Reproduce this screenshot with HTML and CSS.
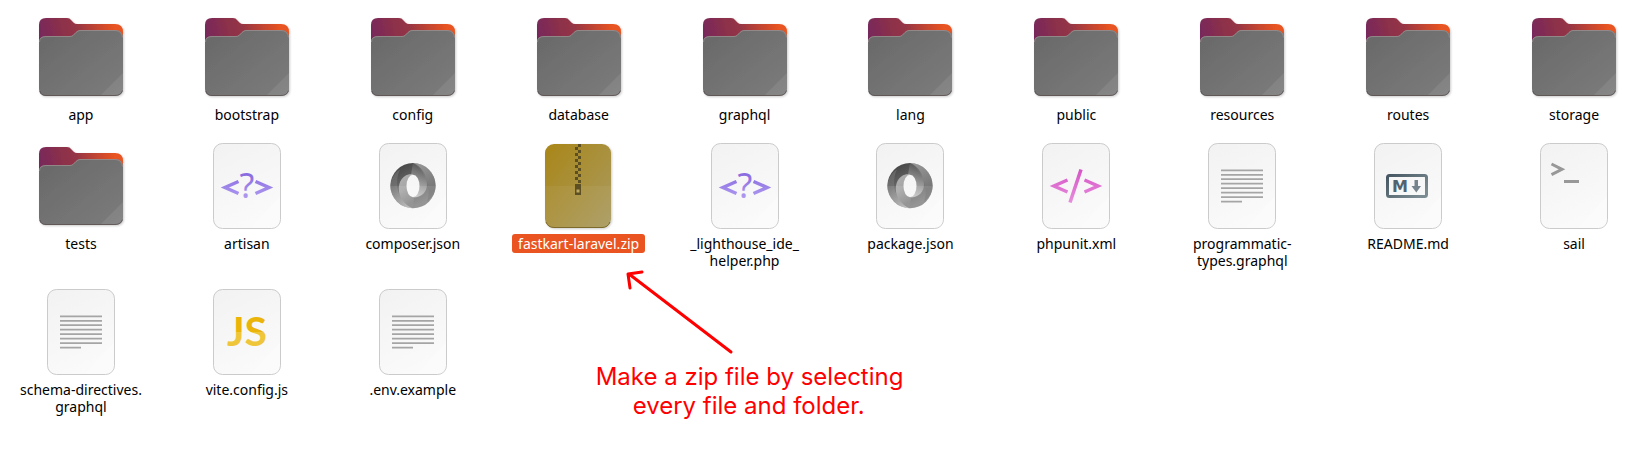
FILE: index.html
```
<!DOCTYPE html>
<html lang="en">
<head>
<meta charset="utf-8">
<meta name="viewport" content="width=device-width, initial-scale=1">
<title>Files</title>
<link rel="stylesheet" href="styles.css">
</head>
<body>
<svg class="sprite" width="0" height="0" aria-hidden="true">
  <defs>
    <linearGradient id="g-back" gradientUnits="userSpaceOnUse" x1="8" y1="34" x2="90" y2="16"><stop offset="0" stop-color="#77285c"/><stop offset=".25" stop-color="#8a2f4c"/><stop offset=".45" stop-color="#953545"/><stop offset=".9" stop-color="#e95420"/></linearGradient>
    <linearGradient id="g-front" x1="0" y1="0" x2="1" y2="1"><stop offset="0" stop-color="#686868"/><stop offset="1" stop-color="#7c7c7c"/></linearGradient>
    <linearGradient id="g-page" x1="0" y1="0" x2=".4" y2="1"><stop offset="0" stop-color="#f2f2f2"/><stop offset="1" stop-color="#fafafa"/></linearGradient>
    <linearGradient id="g-zip" x1="0" y1="0" x2="1" y2="1"><stop offset="0" stop-color="#a98618"/><stop offset="1" stop-color="#a99b62"/></linearGradient>
    <linearGradient id="g-php" gradientUnits="userSpaceOnUse" x1="0" y1="36" x2="0" y2="60"><stop offset="0" stop-color="#8a6be0"/><stop offset="1" stop-color="#ae9af0"/></linearGradient>
    <linearGradient id="g-xml" gradientUnits="userSpaceOnUse" x1="0" y1="32" x2="0" y2="64"><stop offset="0" stop-color="#d655c6"/><stop offset="1" stop-color="#e78ddd"/></linearGradient>
    <linearGradient id="g-js" gradientUnits="userSpaceOnUse" x1="0" y1="33" x2="0" y2="63"><stop offset=".5" stop-color="#ebb40a"/><stop offset=".5" stop-color="#efc53a"/></linearGradient>
    <linearGradient id="g-md" gradientUnits="userSpaceOnUse" x1="26" y1="36" x2="50" y2="66"><stop offset="0" stop-color="#42545f"/><stop offset="1" stop-color="#7c8b92"/></linearGradient>
    <linearGradient id="g-ring" x1="0" y1="0" x2=".5" y2="1"><stop offset="0" stop-color="#3c3c3c"/><stop offset=".5" stop-color="#666"/><stop offset="1" stop-color="#8a8a8a"/></linearGradient>
    <linearGradient id="g-blade-r" x1=".2" y1="0" x2="0" y2="1"><stop offset="0" stop-color="#5c5c5c"/><stop offset=".5" stop-color="#a4a4a4"/><stop offset="1" stop-color="#e4e4e4"/></linearGradient>
    <linearGradient id="g-blade-l" x1="0" y1="0" x2=".3" y2="1"><stop offset="0" stop-color="#c9c9c9"/><stop offset=".5" stop-color="#b4b4b4"/><stop offset="1" stop-color="#8a8a8a"/></linearGradient>
    <linearGradient id="g-rim-r" gradientUnits="userSpaceOnUse" x1="54" y1="26" x2="68" y2="50"><stop offset="0" stop-color="#ccc"/><stop offset="1" stop-color="#707070"/></linearGradient>
    <linearGradient id="g-rim-l" gradientUnits="userSpaceOnUse" x1="42" y1="69" x2="28" y2="48"><stop offset="0" stop-color="#e0e0e0"/><stop offset="1" stop-color="#7c7c7c"/></linearGradient>
    <filter id="shade" x="-10%" y="-10%" width="120%" height="120%"><feDropShadow dx="1" dy="1" stdDeviation="1" flood-opacity=".2"/></filter>

    <symbol id="folder" viewBox="0 0 96 96">
      <g filter="url(#shade)">
        <path d="M6 40V16q0-7 7-7H34q3 0 4 2l3 3q1 1 3 1H82q8 0 8 8V40z" fill="url(#g-back)"/>
        <path d="M6 33q0-6 7-6H37q2 0 3-1l3-3q2-2 4-2H82q8 0 8 8V80q0 7-8 7H13q-7 0-7-7z" fill="url(#g-front)"/>
      </g>
      <path d="M90 64V80q0 7-8 7H67z" fill="#fff" opacity=".08"/>
      <path d="M6.500 33q0-5.500 6.500-5.500H37q2 0 3-1l3-3q2-2 4-2H82q7 0 7.500 7" fill="none" stroke="#9c8f8f" stroke-width=".8"/>
      <path d="M7 82q1 4.500 6 4.500H82q6 0 7.500-5" fill="none" stroke="#5c5050" stroke-width=".8"/>
    </symbol>
    <symbol id="page" viewBox="0 0 96 96">
      <rect x="14.500" y="5.500" width="67" height="85" rx="9" fill="url(#g-page)" stroke="#cbcbcb"/>
      <path d="M81 58V81q0 9-9 9H52z" fill="#fff" opacity=".3"/>
    </symbol>
    <symbol id="php" viewBox="0 0 96 96">
      <use href="#page"/>
      <g fill="none" stroke="url(#g-php)" stroke-width="3.500"><path d="M39.500 43.500L26 49.500l13.500 6"/><path d="M56.500 43.500L70 49.500l-13.500 6"/></g>
      <text class="glyph-question" x="48" y="60" fill="url(#g-php)">?</text>
    </symbol>
    <symbol id="json" viewBox="0 0 96 96">
      <use href="#page"/>
      <circle cx="48" cy="47.700" r="22.600" fill="url(#g-ring)"/>
      <path d="M48 25.100C58 25.100 70.600 33 70.600 48C70.600 56 66 60 62 64C67 50 60 32 48 25.100z" fill="url(#g-rim-r)" opacity=".55"/>
      <path d="M48 70.300C36 70 25.400 60 25.400 48C25.400 42 30 34 35 31.500C28 46 34 64 48 70.300z" fill="url(#g-rim-l)" opacity=".5"/>
      <path d="M48 25.100C56 28 62 37 62 46C62 54 57 59.500 48 59.500L54 48L46 36.500z" fill="url(#g-blade-r)" opacity=".8"/>
      <path d="M48 36C37 36 33.800 44 33.800 51C33.800 59 39 67 48 70.300L49 59.300L42 48z" fill="url(#g-blade-l)" opacity=".8"/>
      <ellipse cx="48" cy="48" rx="6.500" ry="11.300" fill="#f6f6f6"/>
      <path d="M25.500 48h45a22.500 22.500 0 0 1-45 0z" fill="#fff" opacity=".1"/>
    </symbol>
    <symbol id="zip" viewBox="0 0 96 96">
      <g filter="url(#shade)"><rect x="14" y="6" width="66" height="84" rx="9" fill="url(#g-zip)"/></g>
      <path d="M14 48h66V81q0 9-9 9H23q-9 0-9-9z" fill="#fff" opacity=".05"/>
      <path d="M15 84q2 5.500 8 5.500H71q6 0 8-5.500" fill="none" stroke="#7d6b2c"/>
      <path d="M47 6h3v3h-3zm0 6h3v3h-3zm0 6h3v3h-3zm0 6h3v3h-3zm0 6h3v3h-3zm0 6h3v3h-3zm0 6h3v3h-3zM44 9h3v3h-3zm0 6h3v3h-3zm0 6h3v3h-3zm0 6h3v3h-3zm0 6h3v3h-3zm0 6h3v3h-3zM44 46h6v11h-6z" fill="#5c4f24"/>
      <path d="M45.500 51.500h3v3h-3z" fill="#c0a861"/>
    </symbol>
    <symbol id="xml" viewBox="0 0 96 96">
      <use href="#page"/>
      <g fill="none" stroke="url(#g-xml)" stroke-width="3.500"><path d="M39.500 42L26 48l13.500 6"/><path d="M56.500 42L70 48l-13.500 6"/><path d="M53 31.500L42 64.500"/></g>
    </symbol>
    <symbol id="doc" viewBox="0 0 96 96">
      <use href="#page"/>
      <path d="M27 32.300h42M27 36.800h42M27 41.200h42M27 45.700h42M27 50.200h42M27 54.700h42M27 59.200h42M27 63.700h21" stroke="#a5a5a5" stroke-width="1.700"/>
    </symbol>
    <symbol id="md" viewBox="0 0 96 96">
      <use href="#page"/>
      <rect x="27.500" y="37.500" width="39" height="21" rx="2" fill="none" stroke="url(#g-md)" stroke-width="3"/>
      <text class="glyph-md" x="40" y="54" fill="#52636d">M</text>
      <path d="M54.500 42h3.500v6h3L56.300 54.500L51.500 48h3z" fill="#75848c"/>
    </symbol>
    <symbol id="shell" viewBox="0 0 96 96">
      <use href="#page"/>
      <path d="M25.500 26L36 31.300L25.500 36.700M38 43.500h15" fill="none" stroke="#989898" stroke-width="3"/>
    </symbol>
    <symbol id="js" viewBox="0 0 96 96">
      <use href="#page"/>
      <text class="glyph-js" x="48" y="62" fill="url(#g-js)">JS</text>
    </symbol>
  </defs>
</svg>

<main>
  <ul class="files">
    <li><button class="file"><svg class="icon" aria-hidden="true"><use href="#folder"/></svg><span class="name">app</span></button></li>
    <li><button class="file"><svg class="icon" aria-hidden="true"><use href="#folder"/></svg><span class="name">bootstrap</span></button></li>
    <li><button class="file"><svg class="icon" aria-hidden="true"><use href="#folder"/></svg><span class="name">config</span></button></li>
    <li><button class="file"><svg class="icon" aria-hidden="true"><use href="#folder"/></svg><span class="name">database</span></button></li>
    <li><button class="file"><svg class="icon" aria-hidden="true"><use href="#folder"/></svg><span class="name">graphql</span></button></li>
    <li><button class="file"><svg class="icon" aria-hidden="true"><use href="#folder"/></svg><span class="name">lang</span></button></li>
    <li><button class="file"><svg class="icon" aria-hidden="true"><use href="#folder"/></svg><span class="name">public</span></button></li>
    <li><button class="file"><svg class="icon" aria-hidden="true"><use href="#folder"/></svg><span class="name">resources</span></button></li>
    <li><button class="file"><svg class="icon" aria-hidden="true"><use href="#folder"/></svg><span class="name">routes</span></button></li>
    <li><button class="file"><svg class="icon" aria-hidden="true"><use href="#folder"/></svg><span class="name">storage</span></button></li>
    <li><button class="file"><svg class="icon" aria-hidden="true"><use href="#folder"/></svg><span class="name">tests</span></button></li>
    <li><button class="file"><svg class="icon" aria-hidden="true"><use href="#php"/></svg><span class="name">artisan</span></button></li>
    <li><button class="file"><svg class="icon" aria-hidden="true"><use href="#json"/></svg><span class="name">composer.json</span></button></li>
    <li class="annotated">
      <button class="file selected"><svg class="icon" aria-hidden="true"><use href="#zip"/></svg><span class="name">fastkart-laravel.zip</span></button>
      <div class="note">
        <svg class="arrow" viewBox="0 0 120 90" fill="none" stroke="#f00" stroke-width="3" stroke-linecap="round" stroke-linejoin="round" aria-hidden="true"><path d="M109 84L7 6M20 4L6 6l2 14"/></svg>
        <p class="note-text">Make a zip file by selecting<br>every file and folder.</p>
      </div>
    </li>
    <li><button class="file"><svg class="icon" aria-hidden="true"><use href="#php"/></svg><span class="name">_lighthouse_ide_<br>helper.php</span></button></li>
    <li><button class="file"><svg class="icon" aria-hidden="true"><use href="#json"/></svg><span class="name">package.json</span></button></li>
    <li><button class="file"><svg class="icon" aria-hidden="true"><use href="#xml"/></svg><span class="name">phpunit.xml</span></button></li>
    <li><button class="file"><svg class="icon" aria-hidden="true"><use href="#doc"/></svg><span class="name">programmatic-<br>types.graphql</span></button></li>
    <li><button class="file"><svg class="icon" aria-hidden="true"><use href="#md"/></svg><span class="name">README.md</span></button></li>
    <li><button class="file"><svg class="icon" aria-hidden="true"><use href="#shell"/></svg><span class="name">sail</span></button></li>
    <li><button class="file"><svg class="icon" aria-hidden="true"><use href="#doc"/></svg><span class="name">schema-directives.<br>graphql</span></button></li>
    <li><button class="file"><svg class="icon" aria-hidden="true"><use href="#js"/></svg><span class="name">vite.config.js</span></button></li>
    <li><button class="file"><svg class="icon" aria-hidden="true"><use href="#doc"/></svg><span class="name">.env.example</span></button></li>
  </ul>
</main>
</body>
</html>
```
FILE: styles.css
```
body {
  margin: 0;
  background: #fff;
  color: #000;
  font-family: "Noto Sans", "Open Sans", sans-serif;
}

.sprite {
  position: absolute;
}

.files {
  display: grid;
  grid-template-columns: repeat(10, minmax(0, 1fr));
  gap: 14px 24px;
  margin: 0;
  padding: 9px 5px 40px 10px;
  list-style: none;
}

.file {
  display: flex;
  flex-direction: column;
  align-items: center;
  width: 100%;
  padding: 0;
  border: 0;
  background: none;
  color: inherit;
  font: inherit;
}

.icon {
  width: 96px;
  height: 96px;
}

.name {
  padding: 1px 6px;
  border-radius: 3px;
  font-size: 14px;
  line-height: 17px;
  white-space: nowrap;
}

.selected .name {
  background: #e95420;
  color: #fff;
}

.annotated {
  position: relative;
}

.note {
  position: absolute;
  top: 130px;
  left: 88px;
  width: 306px;
  color: #f00;
}

.arrow {
  display: block;
  width: 120px;
  height: 90px;
  margin-left: 26px;
}

.note-text {
  margin: 4px 0 0;
  padding-bottom: 8px;
  font-family: Inter, sans-serif;
  font-size: 24px;
  line-height: 29px;
  text-align: center;
  white-space: nowrap;
}

.glyph-question,
.glyph-md,
.glyph-js {
  text-anchor: middle;
}

.glyph-question {
  font: 34px "Noto Sans", sans-serif;
}

.glyph-md {
  font: bold 16px "DejaVu Sans", sans-serif;
}

.glyph-js {
  font: bold 41px Lato, sans-serif;
}
```
